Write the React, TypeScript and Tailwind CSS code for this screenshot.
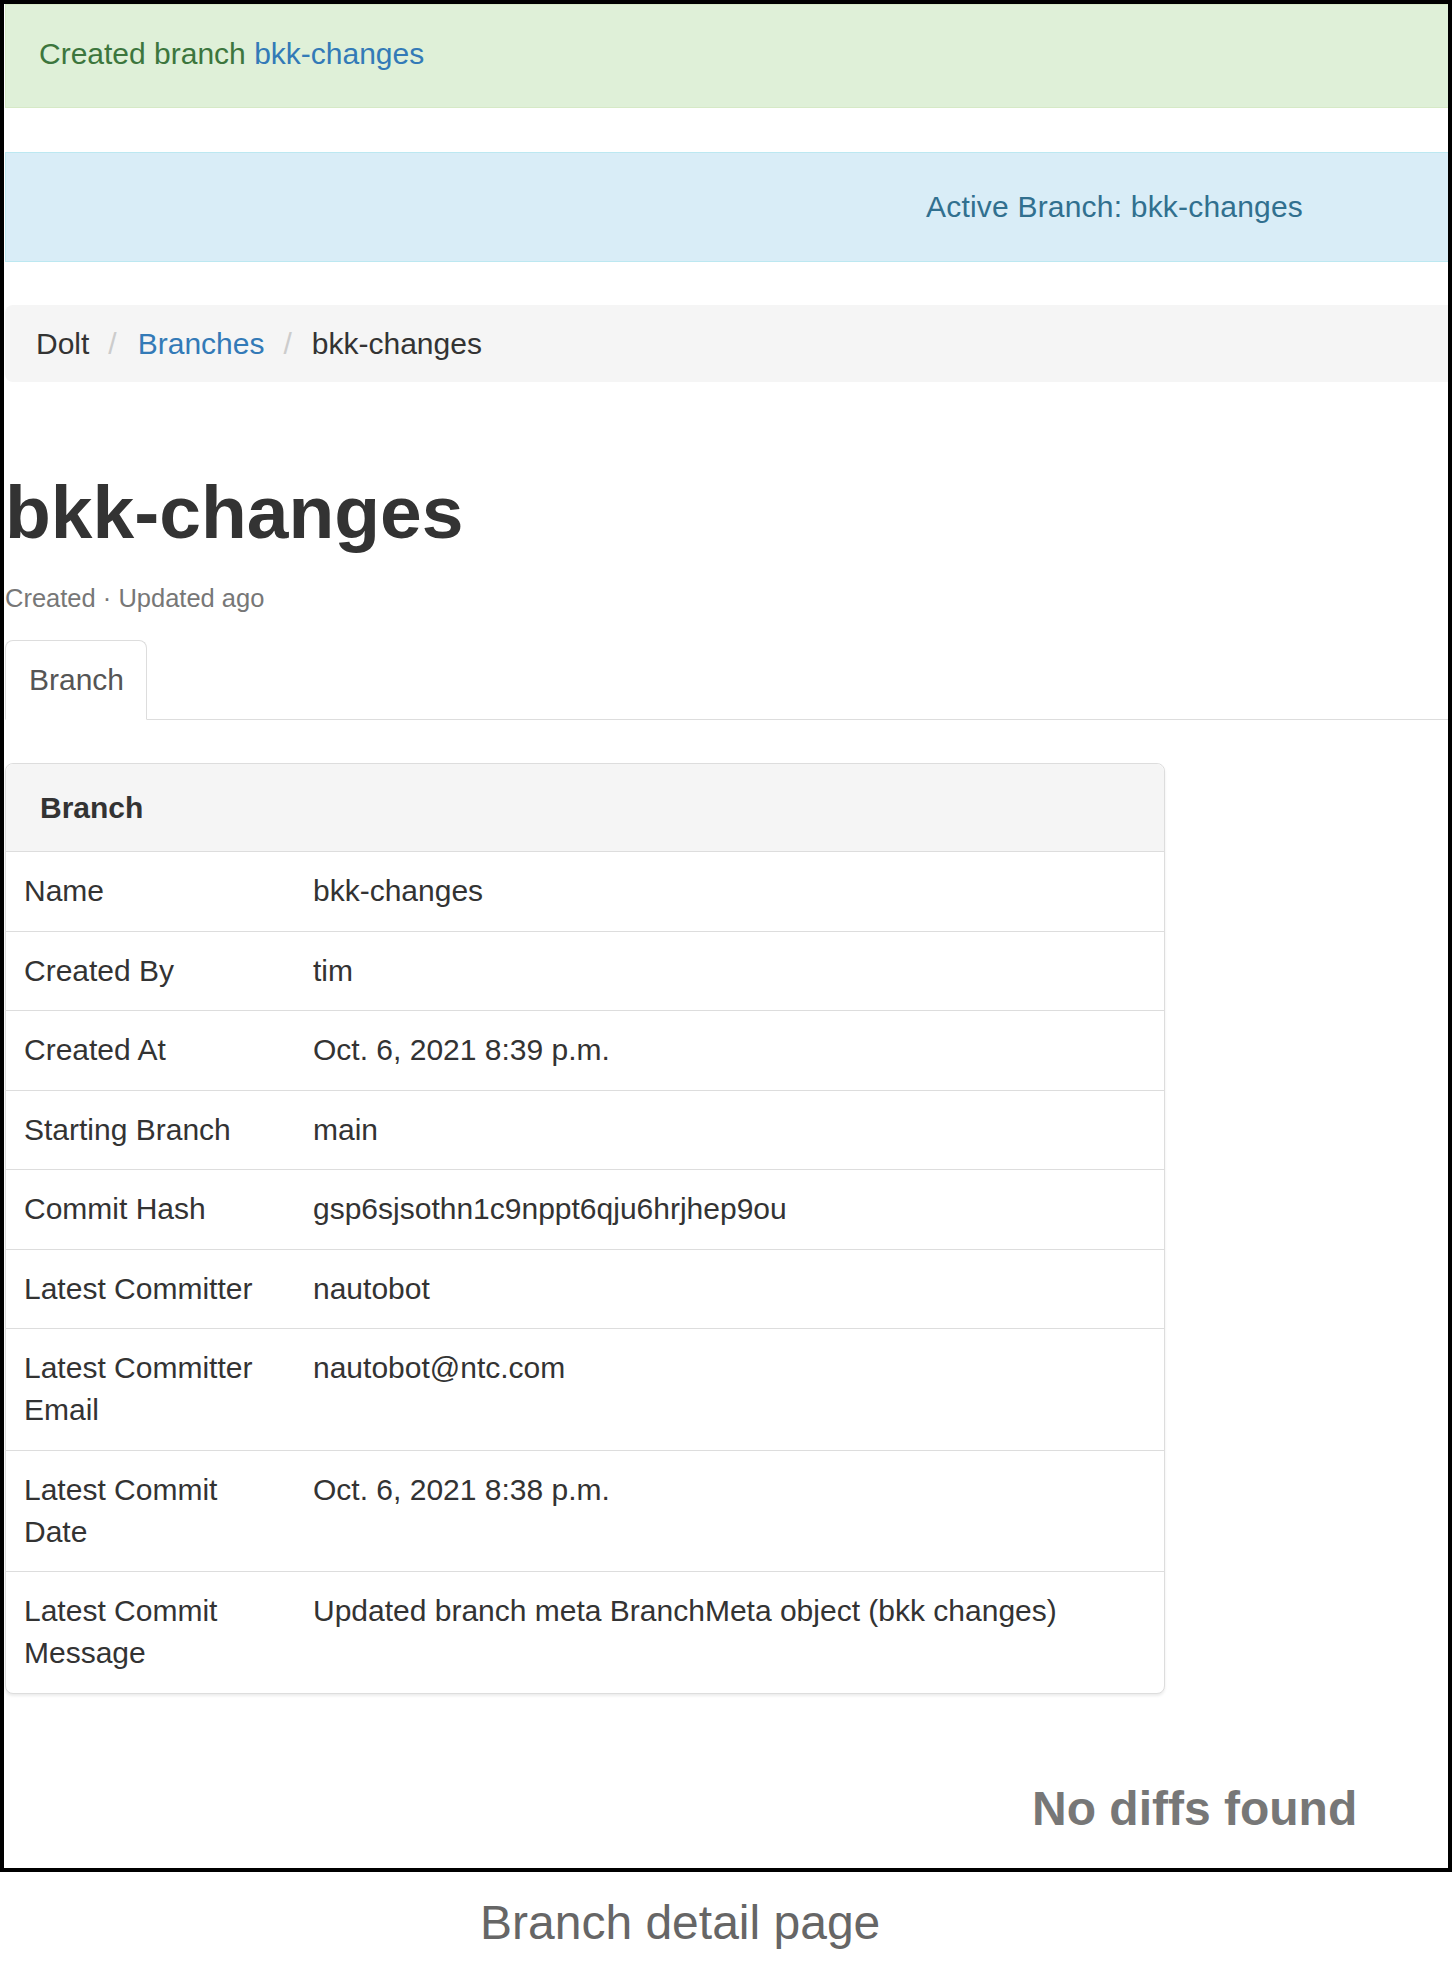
// Branch detail page (Nautobot / Dolt plugin), scaled-up Bootstrap 3 look

const rows: [string, string][] = [
  ['Name', 'bkk-changes'],
  ['Created By', 'tim'],
  ['Created At', 'Oct. 6, 2021 8:39 p.m.'],
  ['Starting Branch', 'main'],
  ['Commit Hash', 'gsp6sjsothn1c9nppt6qju6hrjhep9ou'],
  ['Latest Committer', 'nautobot'],
  ['Latest Committer Email', 'nautobot@ntc.com'],
  ['Latest Commit Date', 'Oct. 6, 2021 8:38 p.m.'],
  ['Latest Commit Message', 'Updated branch meta BranchMeta object (bkk changes)'],
];

function DetailRow({ label, value }: { label: string; value: string }) {
  return (
    <div className="grid grid-cols-[290px_1fr]">
      <div className="pl-[18px] pr-[18px] pt-[18px] pb-[18.5px]">{label}</div>
      <div className="pl-[17px] pr-[18px] pt-[18px] pb-[18.5px]">{value}</div>
    </div>
  );
}

export default function App() {
  return (
    <div className="w-[1452px] h-[1962px] bg-white text-[#333] text-[30px] leading-[42px] font-['Liberation_Sans',Arial,sans-serif]">
      {/* framed screenshot */}
      <div className="w-[1452px] h-[1872px] border-4 border-black overflow-hidden">
        <div className="w-[1480px] pl-px">
          {/* success message */}
          <div className="bg-[#dff0d8] border border-[#d6e9c6] text-[#3c763d] pl-[33px] pt-[27px] pb-[32px] leading-[43px]">
            Created branch <span className="text-[#337ab7]">bkk-changes</span>
          </div>

          {/* active branch bar */}
          <div className="mt-[44px] bg-[#d9edf7] border border-[#bce8f1] text-[#31708f] pl-[920px] pt-[32px] pb-[33px] leading-[43px] tracking-[0.2px]">
            Active Branch: bkk-changes
          </div>

          {/* breadcrumb */}
          <div className="mt-[43px] bg-[#f5f5f5] rounded-lg flex items-center pl-[31px] pt-[17px] pb-[17px] leading-[43px]">
            <span>Dolt</span>
            <span className="ml-[19px] mr-[21px] text-[#ccc]">/</span>
            <span className="text-[#337ab7]">Branches</span>
            <span className="ml-[19px] mr-[20px] text-[#ccc]">/</span>
            <span>bkk-changes</span>
          </div>

          {/* title */}
          <h1 className="mt-[89px] text-[75px] leading-[82px] font-bold">bkk-changes</h1>
          <div className="mt-[27px] text-[25.5px] leading-[36px] text-[#777]">Created · Updated ago</div>

          {/* tabs */}
          <div className="mt-[24px] h-[80px] border-b border-[#ddd] flex">
            <div className="h-[80px] border border-[#ddd] border-b-white bg-white rounded-t-lg pl-[23px] pr-[22px] pt-[17px] text-[#555] leading-[43px]">
              Branch
            </div>
          </div>

          {/* branch panel */}
          <div className="mt-[43px] w-[1160px] border border-[#ddd] rounded-lg bg-white shadow-[0_2px_3px_rgba(0,0,0,0.08)]">
            <div className="bg-[#f5f5f5] border-b border-[#ddd] rounded-t-lg pl-[34px] pt-[22px] pb-[22px] leading-[43px] font-bold">
              Branch
            </div>
            <div className="divide-y divide-[#ddd]">
              {rows.map(([label, value]) => (
                <DetailRow key={label} label={label} value={value} />
              ))}
            </div>
          </div>

          {/* diff section */}
          <div className="mt-[88px] pl-[1027px] text-[48px] leading-[53px] font-bold text-[#777]">No diffs found</div>
        </div>
      </div>

      {/* caption */}
      <div className="mt-[23px] pl-[480px] text-[48px] leading-[56px] text-[#666]">Branch detail page</div>
    </div>
  );
}
